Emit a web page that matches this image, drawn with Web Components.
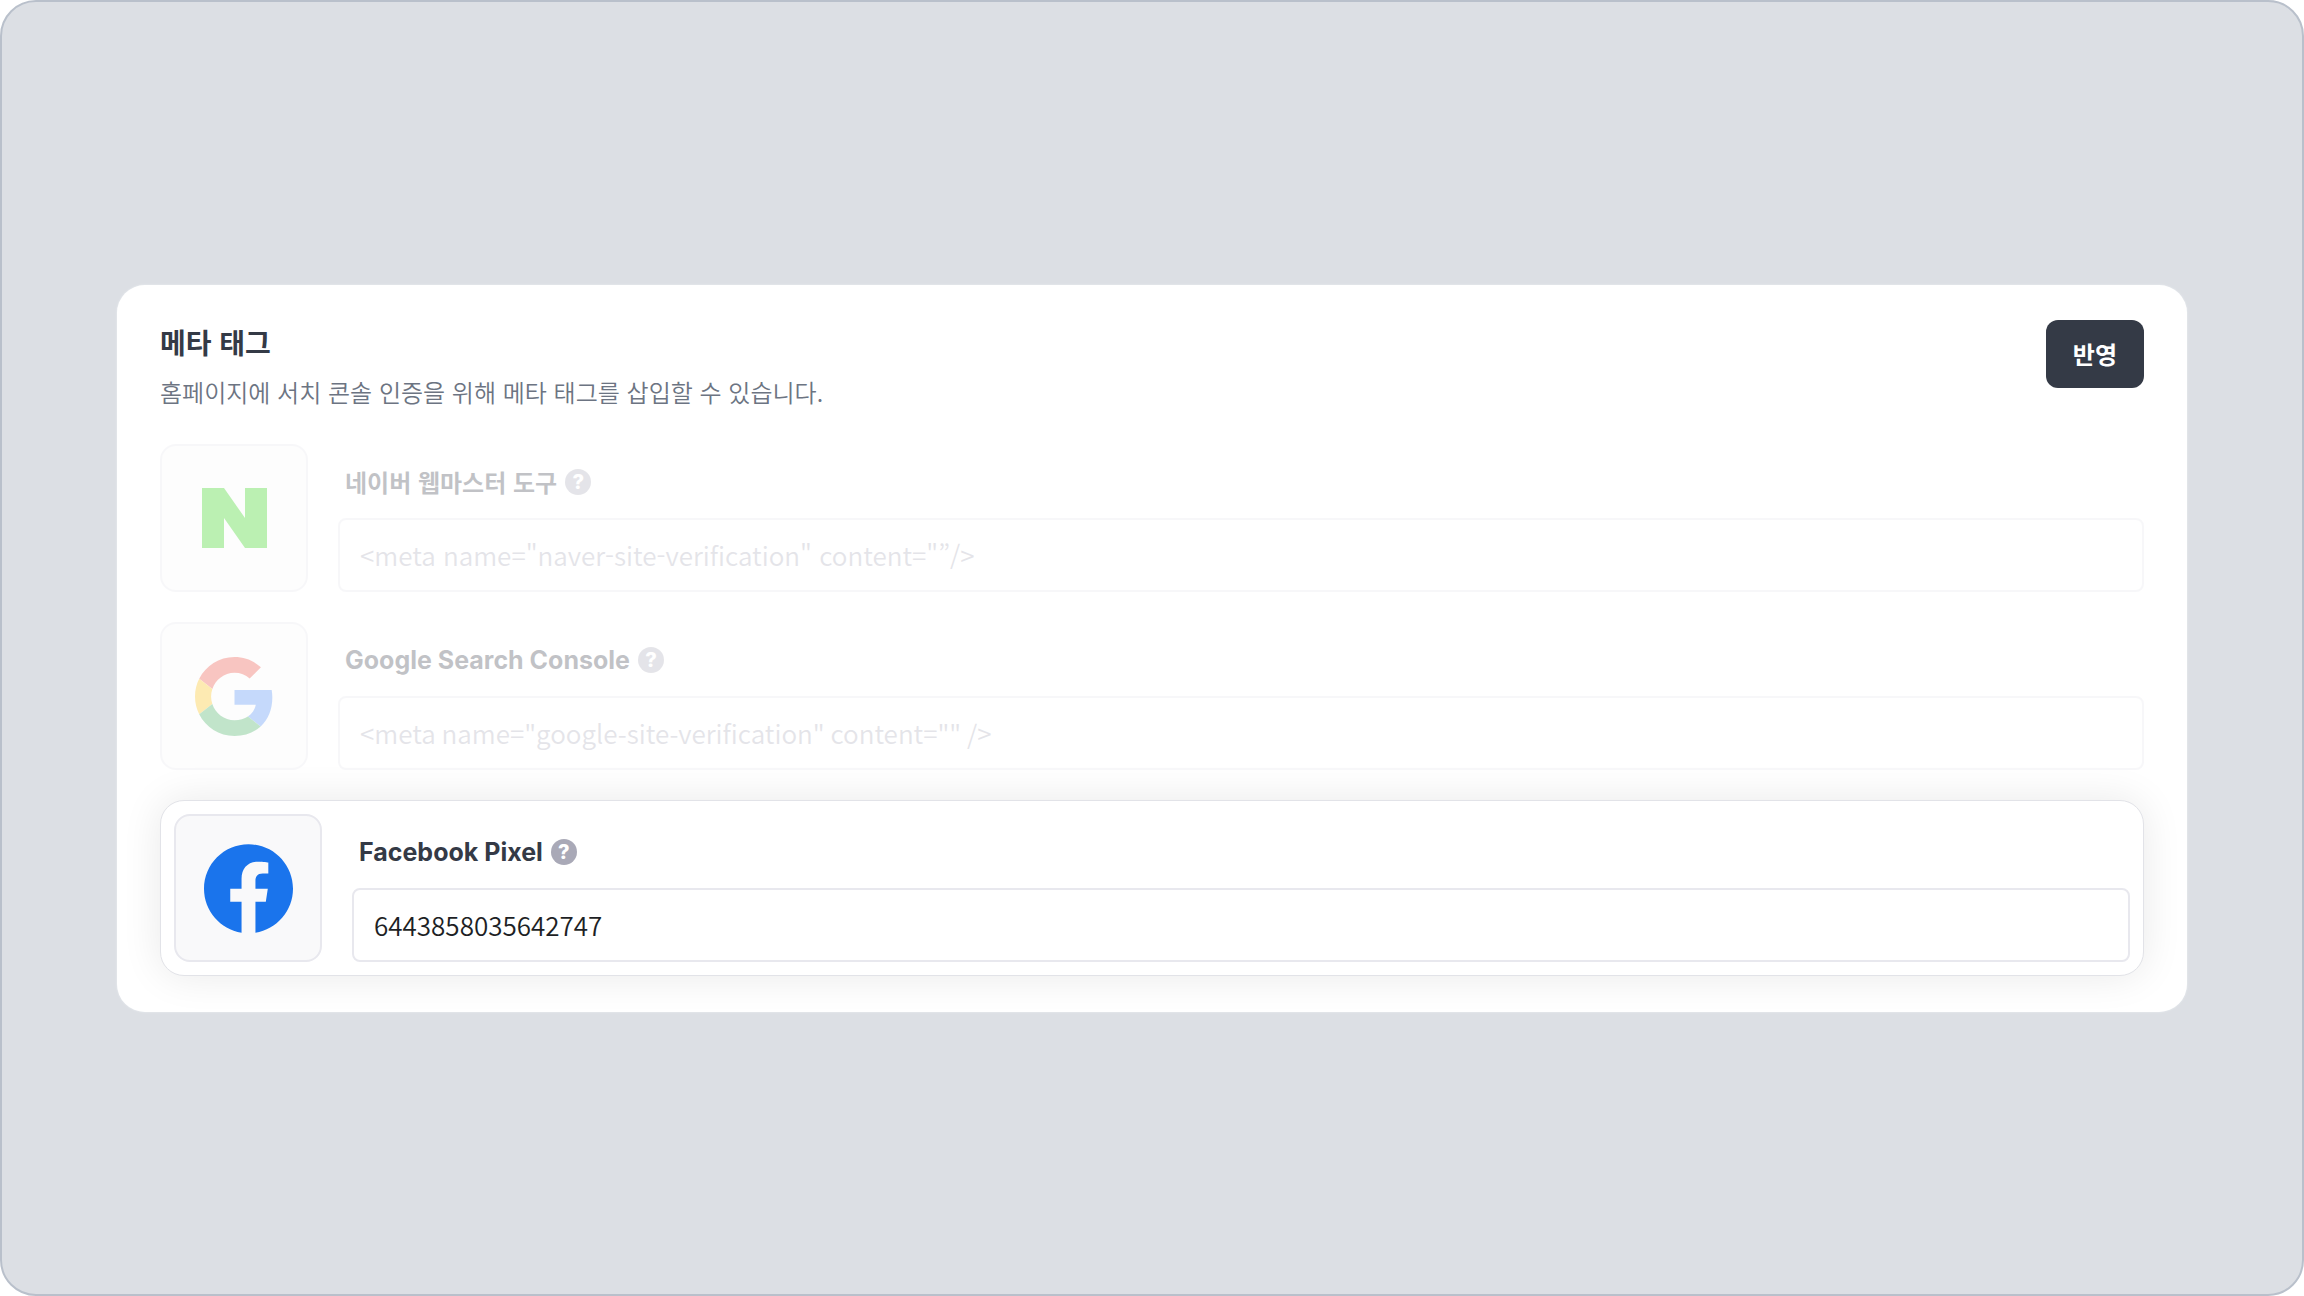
<!DOCTYPE html>
<html lang="ko">
<head>
<meta charset="utf-8">
<meta name="viewport" content="width=device-width, initial-scale=1">
<title>메타 태그</title>
<style>
  body {
    margin: 0;
    background: #fff;
    --ink: #343a46;
    --line: #e8e8ee;
    --muted: #a9a9b7;
    --font-ko: "Noto Sans CJK KR", sans-serif;
    --font-en: Inter, "Noto Sans CJK KR", sans-serif;
    font-family: var(--font-ko);
  }
</style>
</head>
<body>
<settings-stage>
  <settings-card>
    <span slot="title">메타 태그</span>
    <span slot="description">홈페이지에 서치 콘솔 인증을 위해 메타 태그를 삽입할 수 있습니다.</span>
    <apply-button slot="action">반영</apply-button>

    <meta-field dimmed placeholder='&lt;meta name="naver-site-verification" content="”/&gt;'>
      <svg slot="logo" width="65" height="60" viewBox="0 0 65 60" aria-hidden="true">
        <path fill="#23d005" d="M0 0h22l21 30V0h22v60H43L22 30v30H0z"/>
      </svg>
      네이버 웹마스터 도구
    </meta-field>

    <meta-field lang="en" dimmed placeholder='&lt;meta name="google-site-verification" content="" /&gt;'>
      <svg slot="logo" width="79" height="79" viewBox="0 0 48 48" aria-hidden="true">
        <path fill="#ea4335" d="M24 9.5c3.54 0 6.71 1.22 9.21 3.6l6.85-6.85C35.9 2.38 30.47 0 24 0 14.62 0 6.51 5.38 2.56 13.22l7.98 6.19C12.43 13.72 17.74 9.5 24 9.5z"/>
        <path fill="#4285f4" d="M46.98 24.55c0-1.57-.15-3.09-.38-4.55H24v9.02h12.94c-.58 2.96-2.26 5.48-4.78 7.18l7.73 6c4.51-4.18 7.09-10.36 7.09-17.65z"/>
        <path fill="#fbbc05" d="M10.53 28.59c-.48-1.45-.76-2.99-.76-4.59s.27-3.14.76-4.59l-7.98-6.19C.92 16.46 0 20.12 0 24c0 3.88.92 7.54 2.56 10.78l7.97-6.19z"/>
        <path fill="#34a853" d="M24 48c6.48 0 11.93-2.13 15.89-5.81l-7.73-6c-2.15 1.45-4.92 2.3-8.16 2.3-6.26 0-11.57-4.22-13.47-9.91l-7.98 6.19C6.51 42.62 14.62 48 24 48z"/>
      </svg>
      Google Search Console
    </meta-field>

    <meta-field lang="en" active value="6443858035642747">
      <svg slot="logo" width="89" height="89" viewBox="0 0 24 24" aria-hidden="true">
        <path fill="#1a74ec" d="M24 12.073c0-6.627-5.373-12-12-12s-12 5.373-12 12c0 5.99 4.388 10.954 10.125 11.854v-8.385H7.078v-3.47h3.047V9.43c0-3.007 1.792-4.669 4.533-4.669 1.312 0 2.686.235 2.686.235v2.953H15.83c-1.491 0-1.956.925-1.956 1.874v2.25h3.328l-.532 3.47h-2.796v8.385C19.612 23.027 24 18.062 24 12.073z"/>
      </svg>
      Facebook Pixel
    </meta-field>
  </settings-card>
</settings-stage>

<script>
const stageTemplate = document.createElement('template')
stageTemplate.innerHTML = `
  <style>
  :host {
    display: flex;
    flex-direction: column;
    justify-content: center;
    box-sizing: border-box;
    min-height: 100vh;
    padding: 41px 115px 40px;
    background: #dcdfe4;
    border: 2px solid #b9c0cb;
    border-radius: 36px;
  }
  </style>
  <slot></slot>
`

/** Rounded page background that centres its content vertically. */
class SettingsStage extends HTMLElement {
  constructor () {
    super()
    this.attachShadow({ mode: 'open' }).append(stageTemplate.content.cloneNode(true))
  }
}

const cardTemplate = document.createElement('template')
cardTemplate.innerHTML = `
  <style>
  :host {
    display: block;
    padding: 35px 43px 36px;
    background: #fff;
    border-radius: 28px;
    box-shadow: 0 0 2px #eef1f4;
  }
  header {
    display: flex;
    align-items: flex-start;
    justify-content: space-between;
    gap: 30px;
    margin-bottom: 30px;
  }
  h2, p {
    margin: 0;
  }
  h2 {
    color: var(--ink);
    font-size: 28px;
    font-weight: 700;
    line-height: 44px;
  }
  p {
    margin-top: 6px;
    color: #6c7482;
    font-size: 24px;
    font-weight: 350;
    line-height: 44px;
  }
  .fields {
    display: flex;
    flex-direction: column;
    gap: 30px;
  }
  </style>
  <section>
    <header>
      <div>
        <h2><slot name="title"></slot></h2>
        <p><slot name="description"></slot></p>
      </div>
      <slot name="action"></slot>
    </header>
    <div class="fields"><slot></slot></div>
  </section>
`

class SettingsCard extends HTMLElement {
  constructor () {
    super()
    this.attachShadow({ mode: 'open' }).append(cardTemplate.content.cloneNode(true))
  }
}

const buttonTemplate = document.createElement('template')
buttonTemplate.innerHTML = `
  <style>
  :host {
    display: block;
    flex: none;
  }
  button {
    display: block;
    height: 68px;
    padding: 0 27px 2px;
    border: 0;
    border-radius: 12px;
    background: var(--ink);
    color: #fff;
    font: inherit;
    font-size: 24px;
    font-weight: 700;
    cursor: pointer;
  }
  </style>
  <button type="button"><slot></slot></button>
`

class ApplyButton extends HTMLElement {
  constructor () {
    super()
    this.attachShadow({ mode: 'open' }).append(buttonTemplate.content.cloneNode(true))
  }
}

const fieldTemplate = document.createElement('template')
fieldTemplate.innerHTML = `
  <style>
  :host {
    display: flex;
    gap: 30px;
    font-size: 24px;
  }
  :host([lang="en"]) {
    font-family: var(--font-en);
    font-size: 25px;
  }
  :host([dimmed]) {
    opacity: 0.3;
  }
  :host([active]) {
    padding: 13px;
    border: 1px solid #e2e3e8;
    border-radius: 24px;
    background: #fff;
    box-shadow: 0 0 40px rgba(0, 0, 0, 0.09);
  }
  .logo {
    display: flex;
    flex: none;
    align-items: center;
    justify-content: center;
    box-sizing: border-box;
    width: 148px;
    height: 148px;
    border: 2px solid var(--line);
    border-radius: 16px;
    background: #f9f9fa;
  }
  .body {
    display: flex;
    flex: 1;
    flex-direction: column;
    justify-content: flex-end;
    min-width: 0;
  }
  .caption {
    display: flex;
    align-items: center;
    gap: 8px;
    padding: 0 7px;
    margin-bottom: 17px;
  }
  label {
    color: var(--ink);
    font-weight: 700;
    line-height: 38px;
  }
  button {
    width: 26px;
    height: 26px;
    padding: 0;
    border: 0;
    border-radius: 50%;
    background: var(--muted);
    color: #fff;
    font-family: var(--font-en);
    font-size: 20px;
    font-weight: 800;
    line-height: 26px;
    text-align: center;
    cursor: pointer;
  }
  input {
    box-sizing: border-box;
    width: 100%;
    height: 74px;
    padding: 0 20px 2px;
    border: 2px solid var(--line);
    border-radius: 8px;
    outline: none;
    background: #fff;
    color: #1d1f25;
    font-family: var(--font-ko);
    font-size: 26px;
    font-weight: 350;
  }
  input::placeholder {
    color: var(--muted);
    opacity: 1;
  }
  </style>
  <div class="logo"><slot name="logo"></slot></div>
  <div class="body">
    <div class="caption">
      <label for="field"><slot></slot></label>
      <button type="button">?</button>
    </div>
    <input id="field" type="text">
  </div>
`

/**
 * Logo tile with a labelled text field.
 * `dimmed` fades the row, `active` lifts it into a shadowed box.
 */
class MetaField extends HTMLElement {
  constructor () {
    super()
    this._shadowRoot = this.attachShadow({ mode: 'open' })
    this._shadowRoot.append(fieldTemplate.content.cloneNode(true))
    this.$input = this._shadowRoot.getElementById('field')
  }

  static get observedAttributes () {
    return ['placeholder', 'value']
  }

  attributeChangedCallback (name, oldValue, newValue) {
    if (oldValue === newValue) return
    this.$input[name] = newValue || ''
  }
}

customElements.define('settings-stage', SettingsStage)
customElements.define('settings-card', SettingsCard)
customElements.define('apply-button', ApplyButton)
customElements.define('meta-field', MetaField)
</script>
</body>
</html>
